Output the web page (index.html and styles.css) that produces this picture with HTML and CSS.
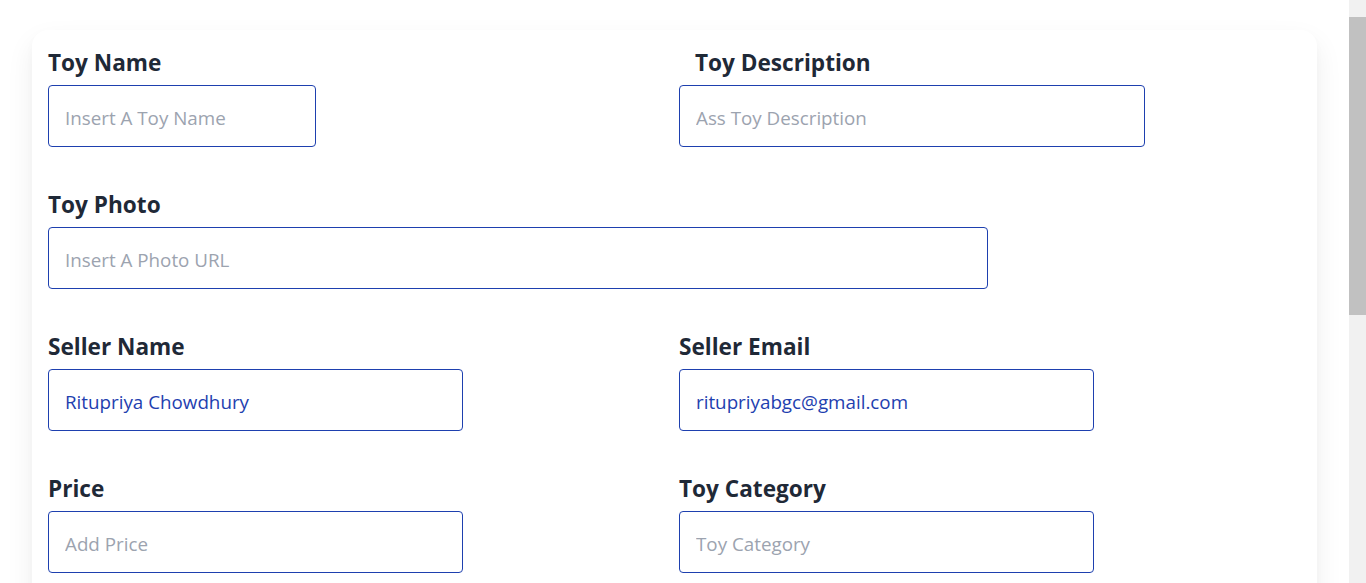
FILE: index.html
```html
<!DOCTYPE html>
<html lang="en">
<head>
<meta charset="utf-8">
<title>Add Toy</title>
<link rel="stylesheet" href="styles.css">
</head>
<body>
<div class="page">
  <main class="content">
    <form class="card">
      <div class="grid">
        <div class="field">
          <label class="label">Toy Name</label>
          <input class="input w-268" type="text" placeholder="Insert A Toy Name">
        </div>
        <div class="field">
          <label class="label indent">Toy Description</label>
          <input class="input w-466" type="text" placeholder="Ass Toy Description">
        </div>
        <div class="field span-2">
          <label class="label">Toy Photo</label>
          <input class="input w-940" type="text" placeholder="Insert A Photo URL">
        </div>
        <div class="field">
          <label class="label">Seller Name</label>
          <input class="input w-415 filled" type="text" value="Ritupriya Chowdhury">
        </div>
        <div class="field">
          <label class="label">Seller Email</label>
          <input class="input w-415 filled" type="email" value="ritupriyabgc@gmail.com">
        </div>
        <div class="field">
          <label class="label">Price</label>
          <input class="input w-415" type="text" placeholder="Add Price">
        </div>
        <div class="field">
          <label class="label">Toy Category</label>
          <input class="input w-415" type="text" placeholder="Toy Category">
        </div>
      </div>
    </form>
  </main>
  <div class="scrollbar"><div class="thumb"></div></div>
</div>
</body>
</html>
```
FILE: styles.css
```css
* { box-sizing: border-box; }
html, body { margin: 0; padding: 0; background: #fff; }
body {
  font-family: "Open Sans", "Noto Sans", "Liberation Sans", sans-serif;
  color: #1f2937;
}
.page {
  display: flex;
  height: 583px;
  overflow: hidden;
}
.content {
  flex: 1;
  padding: 30px 32px 0 32px;
  min-width: 0;
}
.card {
  background: #fff;
  border-radius: 16px;
  box-shadow: 0 12px 28px rgba(0, 0, 0, 0.07), 0 4px 8px rgba(0, 0, 0, 0.025);
  padding: 17px 16px 40px 16px;
  height: 640px;
}
.grid {
  display: grid;
  grid-template-columns: 631px 1fr;
  row-gap: 42px;
}
.field {
  display: flex;
  flex-direction: column;
  align-items: flex-start;
}
.span-2 { grid-column: 1 / span 2; }
.label {
  font-size: 22.6px;
  font-weight: 700;
  line-height: 32px;
  color: #1f2937;
  margin-bottom: 6px;
}
.indent { padding-left: 16px; }
.input {
  height: 62px;
  border: 1px solid #1e40af;
  border-radius: 4px;
  padding: 4px 16px 0 16px;
  font-family: "Open Sans", "Noto Sans", "Liberation Sans", sans-serif;
  font-size: 18.8px;
  color: #1e40af;
  background: #fff;
  outline: none;
}
.input::placeholder { color: #9ca3af; }
.w-268 { width: 268px; }
.w-466 { width: 466px; }
.w-940 { width: 940px; }
.w-415 { width: 415px; }
.scrollbar {
  width: 17px;
  flex: none;
  background: #f1f1f1;
  padding-top: 17px;
}
.thumb {
  height: 298px;
  background: #c1c1c1;
}
```
